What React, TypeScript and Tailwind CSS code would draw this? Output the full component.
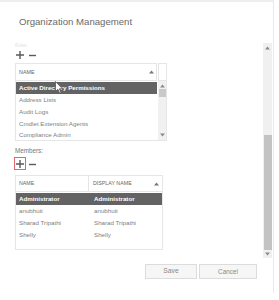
const font = { fontFamily: '"Liberation Sans", Arial, sans-serif' };

function PlusMinus({ boxed }: { boxed?: boolean }) {
  return (
    <div className="flex items-center h-[13px]">
      <div
        className={`flex items-center justify-center w-[12px] h-[13px] ${boxed ? 'border border-[#e0676b]' : 'border border-transparent'}`}
      >
        <svg width="10" height="10" viewBox="0 0 10 10">
          <path d="M5 1v8M1 5h8" stroke="#5a5a5a" strokeWidth="1.4" />
        </svg>
      </div>
      <svg width="9" height="10" viewBox="0 0 9 10" className="ml-[2px]">
        <path d="M1 5.5h7" stroke="#5a5a5a" strokeWidth="1.4" />
      </svg>
    </div>
  );
}

function Up({ c = '#8a8a8a' }: { c?: string }) {
  return (
    <svg width="5" height="4" viewBox="0 0 5 4">
      <path d="M2.5 0.5L5 3.5H0z" fill={c} />
    </svg>
  );
}

function Down({ c = '#8a8a8a' }: { c?: string }) {
  return (
    <svg width="5" height="4" viewBox="0 0 5 4">
      <path d="M0 0.5h5L2.5 3.5z" fill={c} />
    </svg>
  );
}

function Cursor() {
  return (
    <svg width="9" height="13" viewBox="0 0 9 13" className="absolute left-[55px] top-[81px]">
      <path
        d="M0.5 0.5v10l2.4-2.2 1.8 4 1.4-.6-1.8-3.9h3.2z"
        fill="#ffffff"
        stroke="#555"
        strokeWidth="0.8"
        strokeLinejoin="round"
      />
    </svg>
  );
}

export default function App() {
  const roles = ['Address Lists', 'Audit Logs', 'Cmdlet Extension Agents', 'Compliance Admin'];
  const members = [
    ['anubhuti', 'anubhuti'],
    ['Sharad Tripathi', 'Sharad Tripathi'],
    ['Shelly', 'Shelly'],
  ];

  return (
    <div className="relative w-[279px] h-[300px] bg-white overflow-hidden" style={font}>
      <div className="w-[274px] h-[293px] border-t-2 border-t-[#eeeeee] border-r border-r-[#d9ecf9] flex flex-col">
        <div className="h-[41px] pl-[19px] pt-[14px] text-[9.6px] leading-[12px] text-[#6a6a6a]">
          Organization Management
        </div>

        <div className="flex h-[215px]">
          <div className="w-[263px] pl-[15px] overflow-hidden">
            <div className="h-[5px] text-[4.5px] leading-[5px] text-[#e2e2e2] overflow-hidden">Roles:</div>
            <div className="-ml-[1px]">
              <PlusMinus />
            </div>

            <div className="mt-[2px] w-[152px]">
              <div className="flex h-[18px] gap-[1px]">
                <div className="w-[142px] border border-[#e6e6e6] flex items-center justify-between pl-[3px] pr-[2px] text-[5.4px] text-[#666]">
                  <span>NAME</span>
                  <Up c="#777" />
                </div>
                <div className="w-[9px] border border-[#e6e6e6]" />
              </div>
              <div className="flex h-[60px] border-l border-b border-[#e6e6e6]">
                <div className="w-[142px] pt-[1px] overflow-hidden text-[6.2px] text-[#808080]">
                  <div className="h-[12px] bg-[#636363] text-white font-bold flex items-center pl-[3px]">
                    Active Directory Permissions
                  </div>
                  {roles.map((r) => (
                    <div key={r} className="h-[11.7px] flex items-center pl-[3px]">
                      {r}
                    </div>
                  ))}
                </div>
                <div className="w-[9px] ml-[1px] bg-[#f1f1f1] border-r border-[#e6e6e6] flex flex-col items-center pt-[3px] pb-[3px]">
                  <Up />
                  <div className="w-[7px] h-[8px] bg-[#c9c9c9] mt-[1px]" />
                  <div className="flex-1" />
                  <Down />
                </div>
              </div>
            </div>

            <div className="mt-[4px] h-[11px] leading-[11px] text-[6.3px] text-[#777]">Members:</div>
            <div className="-ml-[1px] mt-[1px]">
              <PlusMinus boxed />
            </div>

            <div className="mt-[5px] w-[148px] border border-[#e6e6e6] h-[75px]">
              <div className="flex h-[16px] border-b border-[#e6e6e6] text-[5.3px] text-[#666]">
                <div className="w-[73px] border-r border-[#e6e6e6] flex items-center pl-[3px]">NAME</div>
                <div className="flex-1 flex items-center justify-between pl-[4px] pr-[3px]">
                  <span>DISPLAY NAME</span>
                  <Up c="#777" />
                </div>
              </div>
              <div className="pt-[1px] text-[6.2px] text-[#808080]">
                <div className="h-[12px] bg-[#636363] text-white font-bold flex items-center">
                  <span className="w-[73px] pl-[3px]">Administrator</span>
                  <span className="pl-[5px]">Administrator</span>
                </div>
                {members.map(([a, b]) => (
                  <div key={a} className="h-[11.7px] flex items-center">
                    <span className="w-[73px] pl-[3px]">{a}</span>
                    <span className="pl-[5px]">{b}</span>
                  </div>
                ))}
              </div>
            </div>
          </div>

          <div className="w-[9px] bg-[#f0f0f0] flex flex-col items-center pt-[3px] pb-[2px]">
            <Up />
            <div className="flex-1" />
            <div className="w-[8px] h-[115px] bg-[#c3c3c3]" />
            <div className="mt-[2px]">
              <Down />
            </div>
          </div>
        </div>

        <div className="flex justify-end gap-[2px] pr-[16px] mt-[6px]">
          <button className="w-[52px] h-[15px] bg-[#f6f6f6] border border-[#dcdcdc] text-[6.8px] text-[#8a8a8a]">
            Save
          </button>
          <button className="w-[58px] h-[15px] bg-[#f6f6f6] border border-[#dcdcdc] text-[6.4px] text-[#8a8a8a]">
            Cancel
          </button>
        </div>
      </div>
      <Cursor />
    </div>
  );
}
